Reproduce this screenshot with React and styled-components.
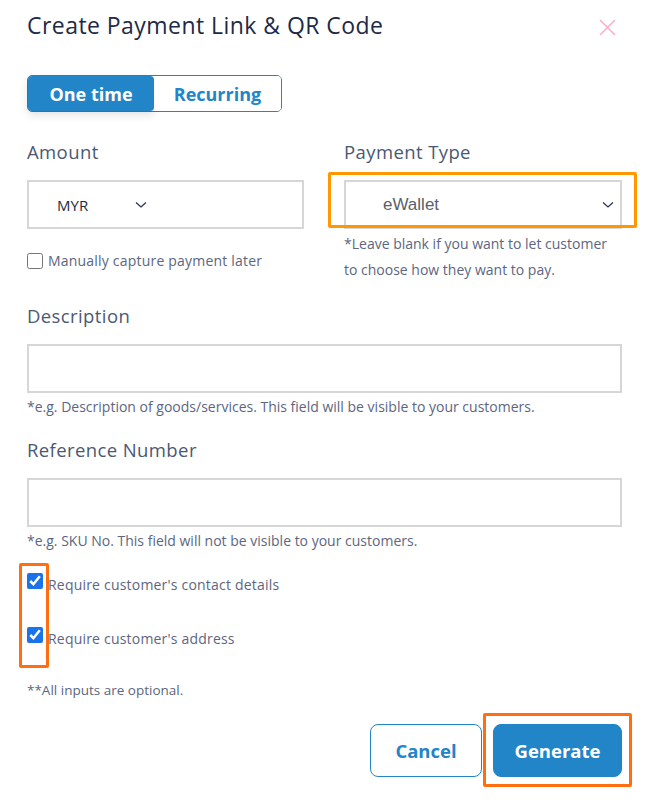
import React from 'react';
import styled, { createGlobalStyle } from 'styled-components';

const GlobalStyle = createGlobalStyle`
  body {
    margin: 0;
    background: #fff;
    font-family: "Open Sans", "Liberation Sans", sans-serif;
  }
`;

const Modal = styled.div`
  width: 654px;
  min-height: 811px;
  box-sizing: border-box;
  padding: 10px 32px 34px 27px;
`;

const Header = styled.div`
  display: flex;
  justify-content: space-between;
  align-items: center;
  height: 30px;
`;

const Title = styled.h2`
  margin: 0;
  font-size: 23px;
  font-weight: 400;
  color: #1e2a45;
  letter-spacing: 0.45px;
`;

const CloseButton = styled.button`
  border: 0;
  background: none;
  padding: 0;
  margin-right: 6px;
  margin-top: 4px;
  display: flex;
`;

const Toggle = styled.div`
  display: inline-flex;
  margin-top: 35px;
  height: 37px;
  border: 1.5px solid #2185c7;
  border-radius: 5px;
  box-sizing: border-box;
`;

const ToggleItem = styled.button`
  border: 0;
  margin: 0;
  font-family: inherit;
  font-size: 18px;
  font-weight: 700;
  padding: 0;
  width: ${p => p.$w}px;
  border-radius: 4px;
  background: ${p => (p.$active ? '#2185c7' : '#fff')};
  color: ${p => (p.$active ? '#fff' : '#2185c7')};
  box-shadow: ${p => (p.$active ? '0 4px 10px rgba(0,0,0,0.12)' : 'none')};
`;

const Grid = styled.div`
  display: grid;
  grid-template-columns: 277px 278px;
  column-gap: 40px;
  margin-top: 28px;
`;

const Field = styled.div`
  display: flex;
  flex-direction: column;
  margin-top: ${p => p.$mt || 0}px;
`;

const Label = styled.label`
  font-size: 18.5px;
  letter-spacing: 0.4px;
  color: #4b5873;
  line-height: 24px;
  height: 24px;
`;

const Box = styled.div`
  position: relative;
  height: 49px;
  margin-top: 16px;
  border: 2px solid #d6d6d6;
  box-sizing: border-box;
  display: flex;
  align-items: center;
`;

const CurrencyText = styled.span`
  font-size: 15px;
  color: #1e2a45;
  margin-left: 28px;
  width: 78px;
`;

const SelectText = styled.span`
  font-family: "Liberation Sans", Arial, sans-serif;
  font-size: 17px;
  color: #5a5f6b;
  margin-left: 37px;
  flex: 1;
`;

const Chevron = styled.svg`
  margin-right: ${p => p.$mr || 0}px;
`;

const Highlight = styled.span`
  position: absolute;
  pointer-events: none;
  border: 3px solid ${p => p.$color || '#ff9800'};
  border-radius: 2px;
  top: ${p => p.$t}px;
  left: ${p => p.$l}px;
  right: ${p => p.$r}px;
  bottom: ${p => p.$b}px;
`;

const CheckRow = styled.label`
  display: flex;
  align-items: center;
  gap: 5px;
  margin-top: ${p => p.$mt || 0}px;
  font-size: 14px;
  letter-spacing: 0.2px;
  color: #5c6680;
`;

const CheckInput = styled.input`
  width: 16px;
  height: 16px;
  margin: 0;
  accent-color: #1a73e8;
  position: relative;
  top: ${p => (p.$up ? -4 : 0)}px;
`;

const Hint = styled.p`
  margin: ${p => p.$mt || 0}px 0 0;
  font-size: ${p => p.$size || 14}px;
  line-height: ${p => p.$lh || 18}px;
  color: #5c6680;
`;

const CheckGroup = styled.div`
  position: relative;
  margin-top: 25px;
  display: flex;
  flex-direction: column;
  gap: 35px;
`;

const Footer = styled.div`
  display: flex;
  justify-content: flex-end;
  gap: 11px;
  margin-top: 25px;
`;

const ButtonWrap = styled.span`
  position: relative;
  display: inline-flex;
`;

const Button = styled.button`
  height: 53px;
  width: ${p => p.$w}px;
  border-radius: 8px;
  font-family: inherit;
  font-size: 18.5px;
  font-weight: 700;
  border: 1.5px solid #2185c7;
  background: ${p => (p.$primary ? '#2185c7' : '#fff')};
  color: ${p => (p.$primary ? '#fff' : '#2185c7')};
`;

const Down = ({ mr }) => (
  <Chevron $mr={mr} width="12" height="8" viewBox="0 0 12 8" fill="none">
    <path d="M1 1.5 L6 6 L11 1.5" stroke="#2b3550" strokeWidth="1.3" />
  </Chevron>
);

export default function App() {
  return (
    <Modal>
      <GlobalStyle />
      <Header>
        <Title>Create Payment Link &amp; QR Code</Title>
        <CloseButton>
          <svg width="17" height="17" viewBox="0 0 17 17">
            <path d="M1 1 L16 16 M16 1 L1 16" stroke="#f7b0c8" strokeWidth="1.5" />
          </svg>
        </CloseButton>
      </Header>

      <Toggle>
        <ToggleItem $active $w={126}>One time</ToggleItem>
        <ToggleItem $w={127}>Recurring</ToggleItem>
      </Toggle>

      <Grid>
        <Field>
          <Label>Amount</Label>
          <Box>
            <CurrencyText>MYR</CurrencyText>
            <Down />
          </Box>
          <CheckRow $mt={22}>
            <CheckInput type="checkbox" />
            <span>Manually capture payment later</span>
          </CheckRow>
        </Field>
        <Field>
          <Label>Payment Type</Label>
          <Box>
            <SelectText>eWallet</SelectText>
            <Down mr={6} />
            <Highlight $t={-10} $l={-18} $r={-17} $b={-1} />
          </Box>
          <Hint $mt={2} $size={14} $lh={26}>
            *Leave blank if you want to let customer<br />to choose how they want to pay.
          </Hint>
        </Field>
      </Grid>

      <Field $mt={21}>
        <Label>Description</Label>
        <Box />
        <Hint $mt={5}>*e.g. Description of goods/services. This field will be visible to your customers.</Hint>
      </Field>

      <Field $mt={22}>
        <Label>Reference Number</Label>
        <Box />
        <Hint $mt={5}>*e.g. SKU No. This field will not be visible to your customers.</Hint>
      </Field>

      <CheckGroup>
        <CheckRow>
          <CheckInput type="checkbox" defaultChecked $up />
          <span>Require customer's contact details</span>
        </CheckRow>
        <CheckRow>
          <CheckInput type="checkbox" defaultChecked $up />
          <span>Require customer's address</span>
        </CheckRow>
        <Highlight $color="#ff6f10" $t={-12} $l={-8} $r={573} $b={-20} />
      </CheckGroup>

      <Hint $mt={33} $size={13.5}>**All inputs are optional.</Hint>

      <Footer>
        <Button $w={112}>Cancel</Button>
        <ButtonWrap>
          <Button $primary $w={129}>Generate</Button>
          <Highlight $color="#ff6f10" $t={-11} $l={-10} $r={-10} $b={-10} />
        </ButtonWrap>
      </Footer>
    </Modal>
  );
}
